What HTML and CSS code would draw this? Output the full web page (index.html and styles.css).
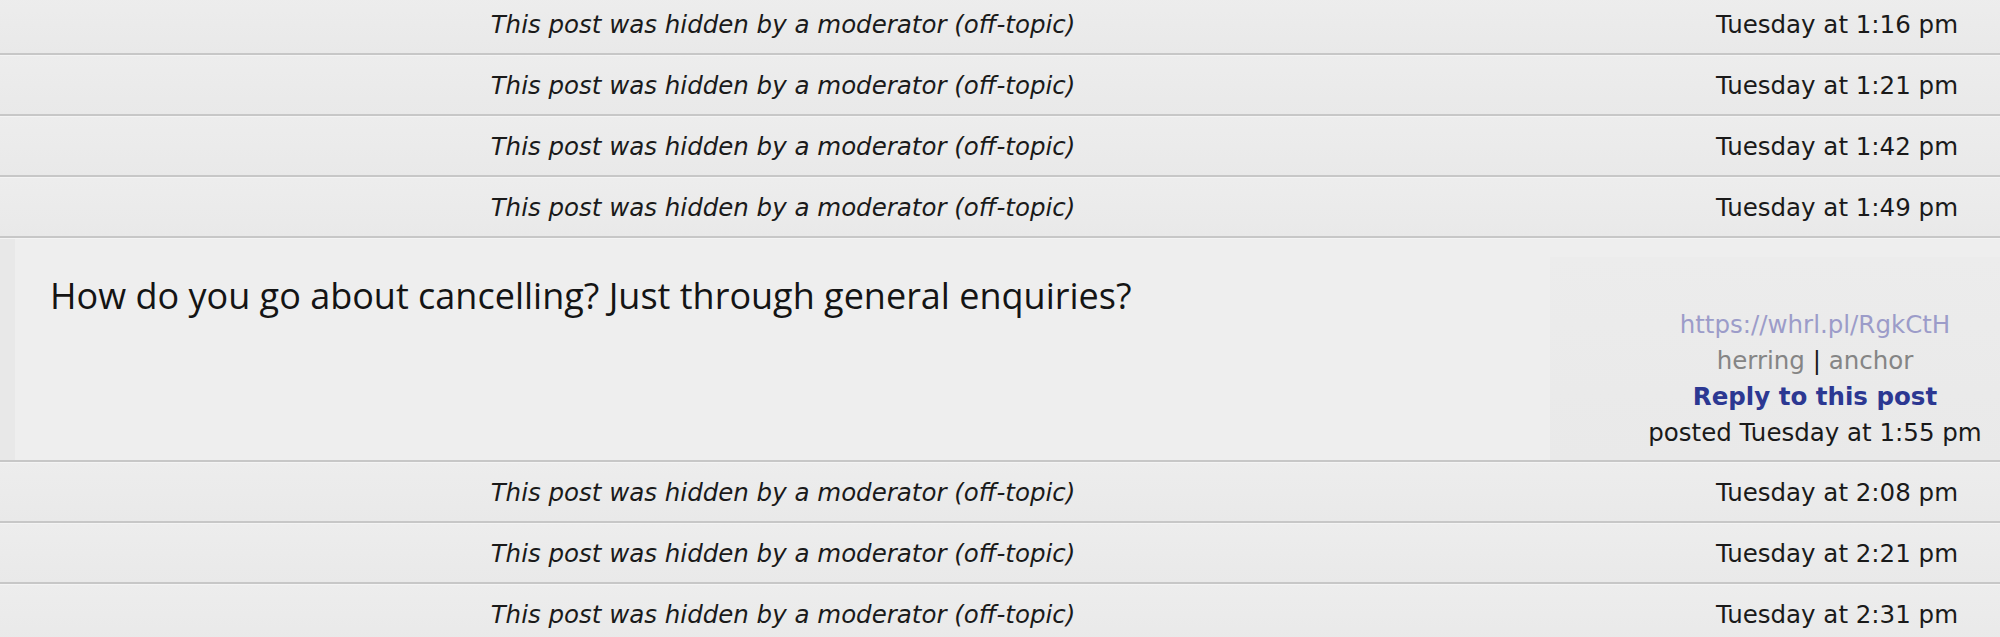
FILE: index.html
```html
<!DOCTYPE html>
<html lang="en">
<head>
    <meta charset="UTF-8">
    <meta name="viewport" content="width=device-width, initial-scale=1.0">
    <title>Thread</title>
    <link rel="stylesheet" href="styles.css">
</head>
<body>
    <div class="thread">
        <div class="row hidden">
            <div class="note">This post was hidden by a moderator (off-topic)</div>
            <div class="stamp">Tuesday at 1:16 pm</div>
        </div>
        <div class="row hidden">
            <div class="note">This post was hidden by a moderator (off-topic)</div>
            <div class="stamp">Tuesday at 1:21 pm</div>
        </div>
        <div class="row hidden">
            <div class="note">This post was hidden by a moderator (off-topic)</div>
            <div class="stamp">Tuesday at 1:42 pm</div>
        </div>
        <div class="row hidden">
            <div class="note">This post was hidden by a moderator (off-topic)</div>
            <div class="stamp">Tuesday at 1:49 pm</div>
        </div>

        <div class="row post">
            <div class="post-edge"></div>
            <div class="post-body">How do you go about cancelling? Just through general enquiries?</div>
            <div class="post-meta">
                <a class="short-link" href="#">https://whrl.pl/RgkCtH</a>
                <div class="tools"><a href="#">herring</a> | <a href="#">anchor</a></div>
                <a class="reply" href="#">Reply to this post</a>
                <div class="posted">posted Tuesday at 1:55 pm</div>
            </div>
        </div>

        <div class="row hidden">
            <div class="note">This post was hidden by a moderator (off-topic)</div>
            <div class="stamp">Tuesday at 2:08 pm</div>
        </div>
        <div class="row hidden">
            <div class="note">This post was hidden by a moderator (off-topic)</div>
            <div class="stamp">Tuesday at 2:21 pm</div>
        </div>
        <div class="row hidden">
            <div class="note">This post was hidden by a moderator (off-topic)</div>
            <div class="stamp">Tuesday at 2:31 pm</div>
        </div>
    </div>
</body>
</html>
```

FILE: styles.css
```css
body, html {
    margin: 0;
    padding: 0;
    background-color: #ebebeb;
    font-family: "DejaVu Sans", Verdana, sans-serif;
    color: #1a1a1a;
    overflow: hidden;
}

.thread {
    margin-top: -6px;
}

/* common row */
.row {
    display: grid;
    grid-template-columns: 1550px 1fr;
    border-top: 1px solid #f4f4f4;
    border-bottom: 2px solid #c7c7c7;
    background: linear-gradient(#ededed, #e9e9e9);
}

/* hidden posts */
.hidden {
    height: 58px;
    align-items: center;
    font-size: 24.5px;
}

.note {
    font-style: italic;
    text-align: center;
    padding-left: 16px;
}

.stamp {
    text-align: right;
    padding-right: 42px;
}

/* visible post */
.post {
    height: 221px;
    grid-template-columns: 15px 1535px 1fr;
    background: #eeeeee;
}

.post-edge {
    background-color: #e8e8e8;
}

.post-body {
    font-family: "Open Sans", sans-serif;
    font-size: 36px;
    padding: 32px 0 0 35px;
    color: #141414;
}

.post-meta {
    display: flex;
    flex-direction: column;
    justify-content: flex-end;
    align-items: center;
    margin-top: 18px;
    padding: 0 0 9px 80px;
    background: linear-gradient(#ececec, #e9e9e9);
    font-size: 24.5px;
    line-height: 36px;
}

.post-meta a {
    text-decoration: none;
}

.short-link {
    color: #9c9cc9;
}

.tools {
    color: #1a1a1a;
}

.tools a {
    color: #858585;
}

.reply {
    color: #2c3892;
    font-weight: bold;
}
```
